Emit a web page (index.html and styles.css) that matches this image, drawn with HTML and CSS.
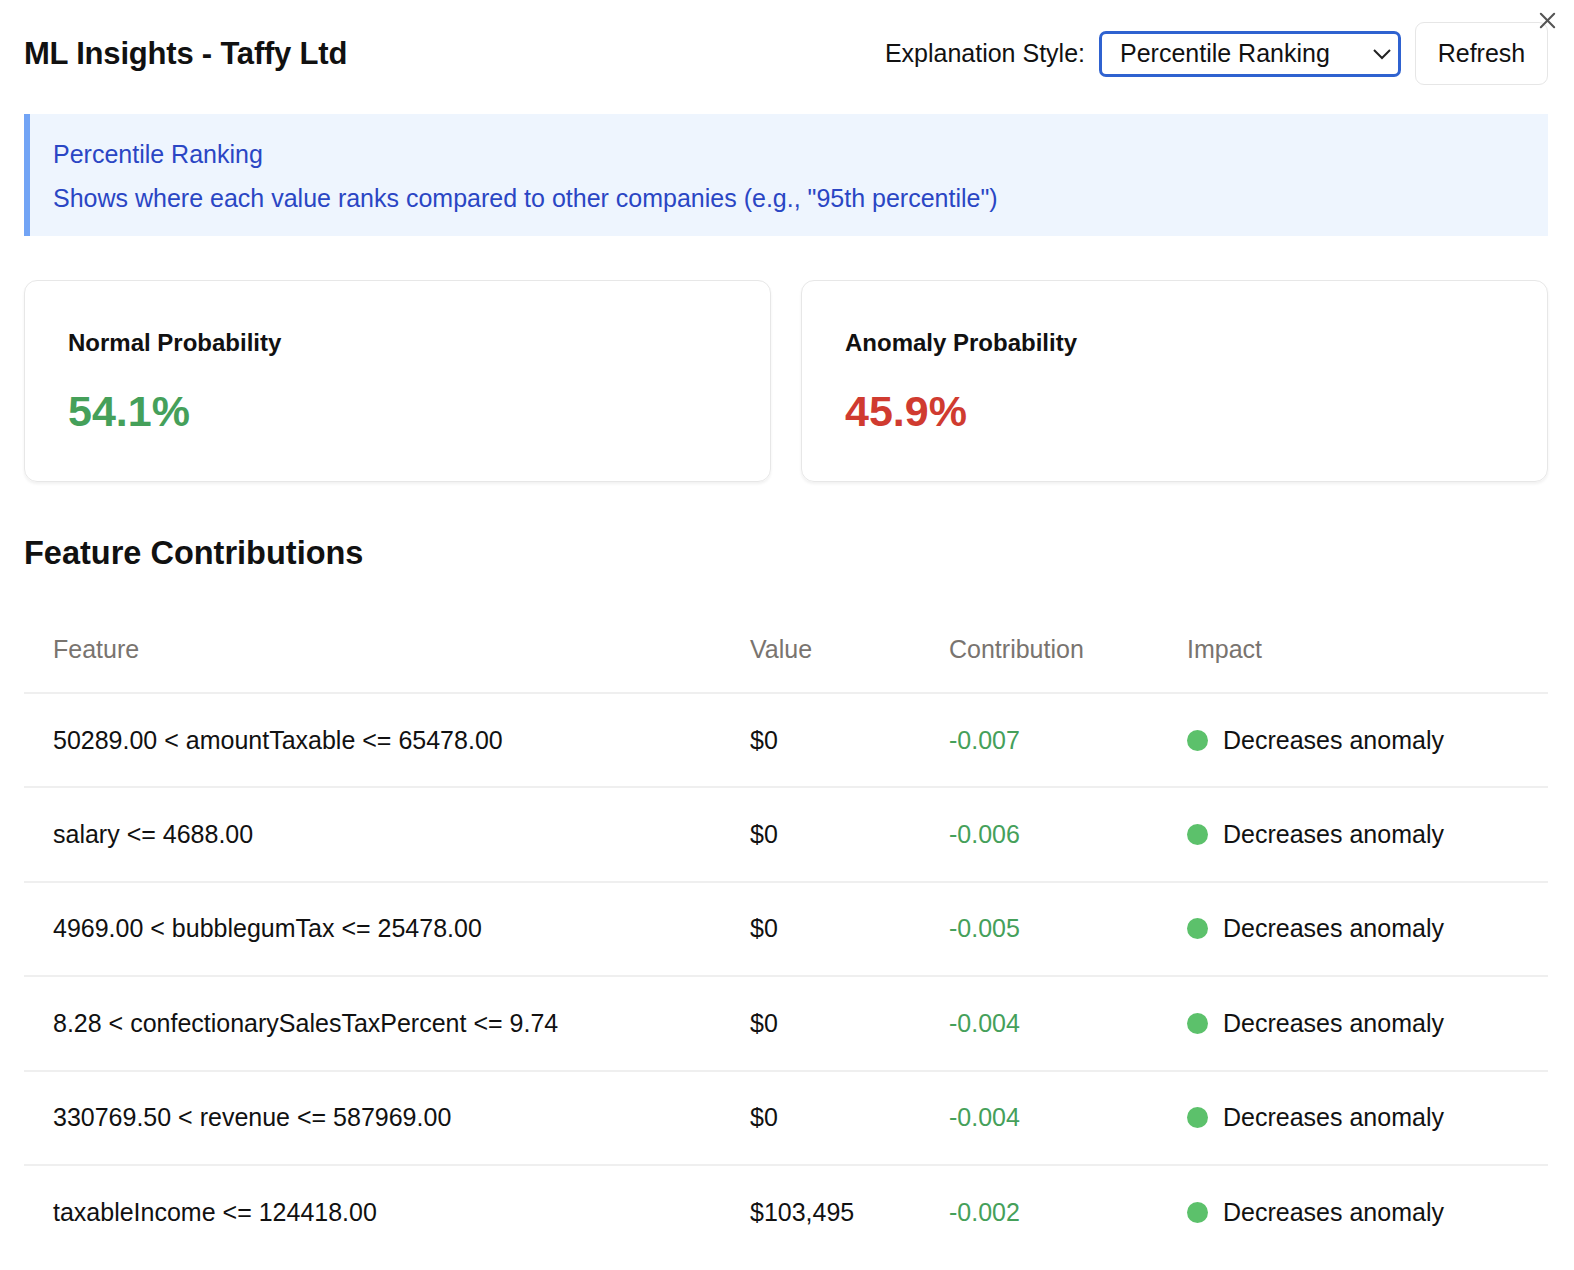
FILE: index.html
```html
<!DOCTYPE html>
<html>
<head>
<meta charset="utf-8">
<link rel="stylesheet" href="styles.css">
</head>
<body>
<div class="panel">
  <button class="close" aria-label="Close">
    <svg width="20" height="20" viewBox="0 0 20 20"><path d="M3 3 L17 17 M17 3 L3 17" stroke="#555" stroke-width="2.2" stroke-linecap="round"/></svg>
  </button>
  <header class="top">
    <h1 class="title">ML Insights - Taffy Ltd</h1>
    <div class="controls">
      <span class="ctl-label">Explanation Style:</span>
      <div class="select">
        <span>Percentile Ranking</span>
        <svg width="20" height="12" viewBox="0 0 20 12"><path d="M2 2 L10 10 L18 2" fill="none" stroke="#222" stroke-width="2"/></svg>
      </div>
      <button class="refresh">Refresh</button>
    </div>
  </header>

  <div class="info">
    <div class="info-title">Percentile Ranking</div>
    <div class="info-desc">Shows where each value ranks compared to other companies (e.g., "95th percentile")</div>
  </div>

  <div class="cards">
    <div class="card">
      <div class="card-label">Normal Probability</div>
      <div class="card-value green">54.1%</div>
    </div>
    <div class="card">
      <div class="card-label">Anomaly Probability</div>
      <div class="card-value red">45.9%</div>
    </div>
  </div>

  <h2 class="section">Feature Contributions</h2>

  <table class="features">
    <colgroup>
      <col class="c1"><col class="c2"><col class="c3"><col class="c4">
    </colgroup>
    <thead>
      <tr><th>Feature</th><th>Value</th><th>Contribution</th><th>Impact</th></tr>
    </thead>
    <tbody>
      <tr><td>50289.00 &lt; amountTaxable &lt;= 65478.00</td><td>$0</td><td class="neg">-0.007</td><td><span class="dot"></span>Decreases anomaly</td></tr>
      <tr><td>salary &lt;= 4688.00</td><td>$0</td><td class="neg">-0.006</td><td><span class="dot"></span>Decreases anomaly</td></tr>
      <tr><td>4969.00 &lt; bubblegumTax &lt;= 25478.00</td><td>$0</td><td class="neg">-0.005</td><td><span class="dot"></span>Decreases anomaly</td></tr>
      <tr><td>8.28 &lt; confectionarySalesTaxPercent &lt;= 9.74</td><td>$0</td><td class="neg">-0.004</td><td><span class="dot"></span>Decreases anomaly</td></tr>
      <tr><td>330769.50 &lt; revenue &lt;= 587969.00</td><td>$0</td><td class="neg">-0.004</td><td><span class="dot"></span>Decreases anomaly</td></tr>
      <tr><td>taxableIncome &lt;= 124418.00</td><td>$103,495</td><td class="neg">-0.002</td><td><span class="dot"></span>Decreases anomaly</td></tr>
    </tbody>
  </table>
</div>
</body>
</html>
```

FILE: styles.css
```css
* { box-sizing: border-box; }
html, body { margin: 0; padding: 0; background: #fff; }
body {
  font-family: "Liberation Sans", Arial, Helvetica, sans-serif;
  color: #111;
}
.panel {
  position: relative;
  padding: 22px 26px 0 24px;
}
.close {
  position: absolute;
  top: 11px;
  right: 17px;
  border: none;
  background: none;
  padding: 0;
  width: 19px;
  height: 19px;
  cursor: pointer;
}
.close svg { width: 19px; height: 19px; }
.top {
  display: flex;
  align-items: center;
  justify-content: space-between;
  height: 63px;
}
.title {
  margin: 0;
  font-size: 31px;
  font-weight: 700;
  letter-spacing: -0.2px;
}
.controls {
  display: flex;
  align-items: center;
  height: 63px;
}
.ctl-label {
  font-size: 25px;
  margin-right: 14px;
}
.select {
  width: 302px;
  height: 46px;
  border: 3px solid #2f62d0;
  border-radius: 7px;
  display: flex;
  align-items: center;
  justify-content: space-between;
  padding: 0 6px 0 18px;
  font-size: 25px;
}
.refresh {
  margin-left: 14px;
  width: 133px;
  height: 63px;
  border: 1px solid #e6e6e6;
  border-radius: 9px;
  background: #fff;
  font-family: inherit;
  font-size: 25px;
  color: #111;
}
.info {
  margin-top: 29px;
  background: #eef5fe;
  border-left: 6px solid #72a4f5;
  padding: 18px 0 0 23px;
  color: #2a46c4;
  font-size: 25px;
  line-height: 44px;
  height: 122px;
}
.cards {
  margin-top: 44px;
  display: grid;
  grid-template-columns: 1fr 1fr;
  gap: 30px;
}
.card {
  height: 202px;
  border: 1px solid #e7e7e7;
  border-radius: 13px;
  box-shadow: 0 2px 3px rgba(0,0,0,0.06);
  padding: 44px 0 0 43px;
}
.card-label {
  font-size: 24px;
  font-weight: 700;
  line-height: 36px;
}
.card-value {
  margin-top: 25px;
  font-size: 43px;
  font-weight: 700;
  line-height: 50px;
}
.green { color: #45a05a; }
.red { color: #d03b30; }
.section {
  margin: 51px 0 0 0;
  font-size: 32.5px;
  font-weight: 700;
  line-height: 40px;
}
.features {
  margin-top: 33px;
  width: 100%;
  border-collapse: collapse;
  font-size: 25px;
}
.c1 { width: 697px; }
.c2 { width: 199px; }
.c3 { width: 238px; }
.c4 { width: auto; }
.features th {
  text-align: left;
  font-weight: 400;
  color: #79746f;
  height: 87px;
  padding: 0 0 0 29px;
  border-bottom: 2px solid #efefef;
}
.features td {
  height: 94.4px;
  padding: 0 0 0 29px;
  border-bottom: 2px solid #efefef;
}
.features tbody tr:last-child td { border-bottom: none; }
.neg { color: #45a05a; }
.dot {
  display: inline-block;
  width: 21px;
  height: 21px;
  border-radius: 50%;
  background: #5cc16b;
  margin-right: 15px;
  vertical-align: -2px;
}
```
